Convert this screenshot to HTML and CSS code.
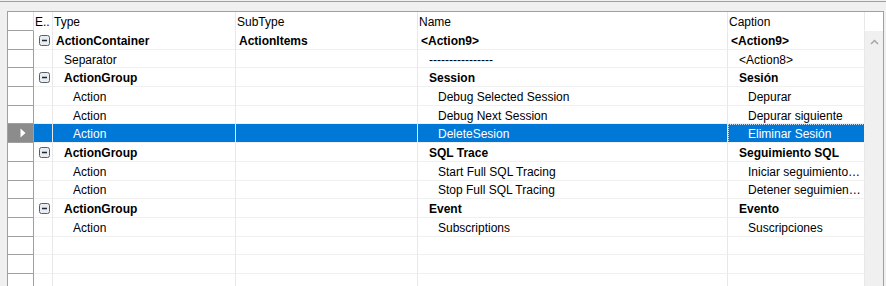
FILE: index.html
```html
<!DOCTYPE html>
<html lang="en">

<head>
    <meta charset="UTF-8">
    <link rel="stylesheet" href="styles.css">
    <title>Actions</title>
</head>

<body>
    <div class="frame">
        <div class="grid">
            <div class="table">
                <div class="row head">
                    <div class="c rh"></div>
                    <div class="c ex">E..</div>
                    <div class="c type">Type</div>
                    <div class="c sub">SubType</div>
                    <div class="c name">Name</div>
                    <div class="c cap">Caption</div>
                </div>

                <div class="row lv0 bold">
                    <div class="c rh"></div>
                    <div class="c ex">
                        <svg class="toggle" width="11" height="11" viewBox="0 0 11 11"><rect x="0.5" y="0.5" width="10" height="10" rx="2" fill="#e9edf1" stroke="#55606b"/><path d="M3 5.5h5" stroke="#1c2733" stroke-width="1.5"/></svg>
                    </div>
                    <div class="c type">ActionContainer</div>
                    <div class="c sub">ActionItems</div>
                    <div class="c name">&lt;Action9&gt;</div>
                    <div class="c cap">&lt;Action9&gt;</div>
                </div>
                <div class="row lv1">
                    <div class="c rh"></div>
                    <div class="c ex"></div>
                    <div class="c type">Separator</div>
                    <div class="c sub"></div>
                    <div class="c name">----------------</div>
                    <div class="c cap">&lt;Action8&gt;</div>
                </div>
                <div class="row lv1 bold">
                    <div class="c rh"></div>
                    <div class="c ex">
                        <svg class="toggle" width="11" height="11" viewBox="0 0 11 11"><rect x="0.5" y="0.5" width="10" height="10" rx="2" fill="#e9edf1" stroke="#55606b"/><path d="M3 5.5h5" stroke="#1c2733" stroke-width="1.5"/></svg>
                    </div>
                    <div class="c type">ActionGroup</div>
                    <div class="c sub"></div>
                    <div class="c name">Session</div>
                    <div class="c cap">Sesión</div>
                </div>
                <div class="row lv2">
                    <div class="c rh"></div>
                    <div class="c ex"></div>
                    <div class="c type">Action</div>
                    <div class="c sub"></div>
                    <div class="c name">Debug Selected Session</div>
                    <div class="c cap">Depurar</div>
                </div>
                <div class="row lv2">
                    <div class="c rh"></div>
                    <div class="c ex"></div>
                    <div class="c type">Action</div>
                    <div class="c sub"></div>
                    <div class="c name">Debug Next Session</div>
                    <div class="c cap">Depurar siguiente</div>
                </div>
                <div class="row lv2 sel">
                    <div class="c rh">
                        <svg width="6" height="10" viewBox="0 0 6 10"><path d="M0.5 0.5L5.5 5L0.5 9.5Z" fill="#fff"/></svg>
                    </div>
                    <div class="c ex"></div>
                    <div class="c type">Action</div>
                    <div class="c sub"></div>
                    <div class="c name">DeleteSesion</div>
                    <div class="c cap">Eliminar Sesión</div>
                </div>
                <div class="row lv1 bold">
                    <div class="c rh"></div>
                    <div class="c ex">
                        <svg class="toggle" width="11" height="11" viewBox="0 0 11 11"><rect x="0.5" y="0.5" width="10" height="10" rx="2" fill="#e9edf1" stroke="#55606b"/><path d="M3 5.5h5" stroke="#1c2733" stroke-width="1.5"/></svg>
                    </div>
                    <div class="c type">ActionGroup</div>
                    <div class="c sub"></div>
                    <div class="c name">SQL Trace</div>
                    <div class="c cap">Seguimiento SQL</div>
                </div>
                <div class="row lv2">
                    <div class="c rh"></div>
                    <div class="c ex"></div>
                    <div class="c type">Action</div>
                    <div class="c sub"></div>
                    <div class="c name">Start Full SQL Tracing</div>
                    <div class="c cap">Iniciar seguimiento…</div>
                </div>
                <div class="row lv2">
                    <div class="c rh"></div>
                    <div class="c ex"></div>
                    <div class="c type">Action</div>
                    <div class="c sub"></div>
                    <div class="c name">Stop Full SQL Tracing</div>
                    <div class="c cap">Detener seguimien…</div>
                </div>
                <div class="row lv1 bold">
                    <div class="c rh"></div>
                    <div class="c ex">
                        <svg class="toggle" width="11" height="11" viewBox="0 0 11 11"><rect x="0.5" y="0.5" width="10" height="10" rx="2" fill="#e9edf1" stroke="#55606b"/><path d="M3 5.5h5" stroke="#1c2733" stroke-width="1.5"/></svg>
                    </div>
                    <div class="c type">ActionGroup</div>
                    <div class="c sub"></div>
                    <div class="c name">Event</div>
                    <div class="c cap">Evento</div>
                </div>
                <div class="row lv2">
                    <div class="c rh"></div>
                    <div class="c ex"></div>
                    <div class="c type">Action</div>
                    <div class="c sub"></div>
                    <div class="c name">Subscriptions</div>
                    <div class="c cap">Suscripciones</div>
                </div>

                <!-- empty rows -->
                <div class="row"><div class="c rh"></div><div class="c ex"></div><div class="c type"></div><div class="c sub"></div><div class="c name"></div><div class="c cap"></div></div>
                <div class="row"><div class="c rh"></div><div class="c ex"></div><div class="c type"></div><div class="c sub"></div><div class="c name"></div><div class="c cap"></div></div>
                <div class="row"><div class="c rh"></div><div class="c ex"></div><div class="c type"></div><div class="c sub"></div><div class="c name"></div><div class="c cap"></div></div>
            </div>

            <div class="scrollbar">
                <div class="sb-head"></div>
                <div class="sb-track">
                    <svg width="9" height="6" viewBox="0 0 9 6"><path d="M1 5L4.5 1.5L8 5" fill="none" stroke="#a6a6a6" stroke-width="1.5"/></svg>
                </div>
            </div>
        </div>
    </div>
</body>

</html>
```

FILE: styles.css
```css
html,
body {
    margin: 0;
    height: 100%;
    overflow: hidden;
}

body {
    background: #f0f0f0;
    font-family: "Liberation Sans", Arial, sans-serif;
    font-size: 12px;
    color: #000;
}

.frame {
    height: 100%;
    box-sizing: border-box;
    margin-top: 1px;
    border-top: 1px solid #a0a0a0;
    padding: 9px 0 0 7px;
}

.grid {
    display: flex;
    width: 877px;
    height: 100%;
    box-sizing: border-box;
    border: 1px solid #a0a0a0;
    border-bottom: 0;
    background: #fff;
    overflow: hidden;
}

.table {
    display: flex;
    flex-direction: column;
}

.row {
    display: flex;
    flex: none;
    height: 18.7px;
}

.row.head {
    height: 19px;
}

.c {
    display: flex;
    align-items: center;
    box-sizing: border-box;
    padding-top: 2px;
    border-right: 1px solid #e8e8e8;
    border-bottom: 1px solid #f0f0f0;
    white-space: nowrap;
    overflow: hidden;
}

.rh {
    width: 26px;
    justify-content: center;
    padding: 0 0 0 5px;
    border-right-color: #a0a0a0;
    border-bottom-color: #a0a0a0;
}

.ex {
    width: 19px;
    padding-left: 5px;
    padding-top: 1px;
}

.type {
    width: 183px;
}

.sub {
    width: 182px;
    padding-left: 3px;
}

.name {
    width: 310px;
}

.cap {
    width: 137px;
}

/* header */
.head .c {
    padding-left: 1px;
    border-bottom-color: #fff;
}

.head .rh {
    border-right-color: #e0e0e0;
    border-bottom-color: #a0a0a0;
}

/* tree levels */
.lv0 .type,
.lv0 .name,
.lv0 .cap {
    padding-left: 3px;
}

.lv1 .type,
.lv1 .name,
.lv1 .cap {
    padding-left: 11px;
}

.lv2 .type,
.lv2 .name,
.lv2 .cap {
    padding-left: 20px;
}

.bold {
    font-weight: bold;
}

/* selected row */
.sel .c {
    background: #0078d7;
    color: #fff;
}

.sel .rh {
    background: #8c8c8c;
}

.sel .cap {
    outline: 1px dotted rgba(255, 255, 255, 0.75);
    outline-offset: -1px;
}

/* scrollbar */
.scrollbar {
    display: flex;
    flex-direction: column;
    width: 18px;
}

.sb-head {
    height: 19px;
    background: #fff;
}

.sb-track {
    flex: 1;
    display: flex;
    justify-content: center;
    align-items: flex-start;
    padding-top: 8px;
    background: #f0f0f0;
}
```
